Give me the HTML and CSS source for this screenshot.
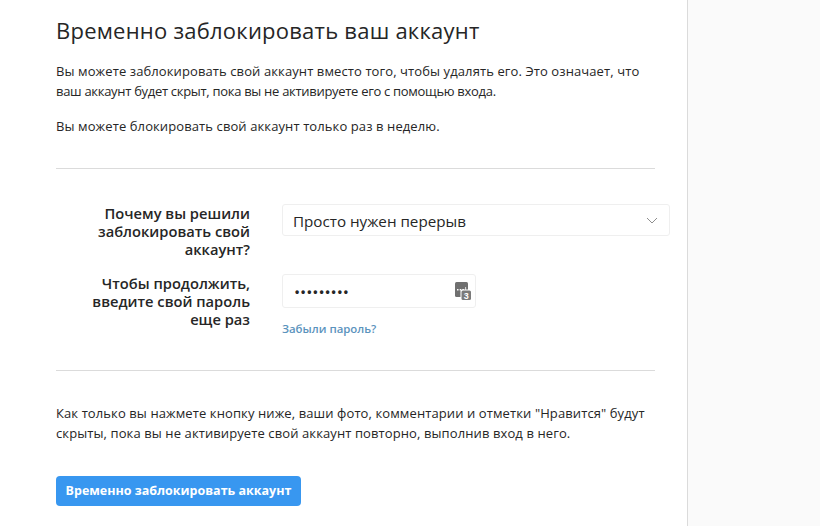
FILE: index.html
```html
<!DOCTYPE html>
<html lang="ru">
<head>
<meta charset="utf-8">
<title>Временно заблокировать ваш аккаунт</title>
<link rel="stylesheet" href="styles.css">
</head>
<body>
<div class="page">
  <main class="panel">
    <h1 class="title">Временно заблокировать ваш аккаунт</h1>
    <p class="text first">Вы можете заблокировать свой аккаунт вместо того, чтобы удалять его. Это означает, что<br><span class="tight">ваш аккаунт будет скрыт, пока вы не активируете его с помощью входа.</span></p>
    <p class="text second">Вы можете блокировать свой аккаунт только раз в неделю.</p>
    <hr class="rule rule-top">
    <div class="field field-reason">
      <div class="label">Почему вы решили заблокировать свой аккаунт?</div>
      <div class="control">
        <div class="select">
          <span>Просто нужен перерыв</span>
          <svg class="chevron" width="12" height="7" viewBox="0 0 12 7"><path d="M1 1l5 5 5-5" fill="none" stroke="#8e8e8e" stroke-width="1"/></svg>
        </div>
      </div>
    </div>
    <div class="field field-pass">
      <div class="label">Чтобы продолжить, введите свой пароль еще раз</div>
      <div class="control">
        <div class="input">
          <span class="dots">•••••••••</span>
          <svg class="keyicon" width="16" height="18" viewBox="0 0 16 18">
            <rect x="0" y="0" width="13" height="15" rx="1.5" fill="#707070"/>
            <rect x="2" y="7" width="1.5" height="1.5" fill="#fff"/>
            <rect x="4.7" y="7" width="1.5" height="1.5" fill="#fff"/>
            <rect x="7.4" y="7" width="1.5" height="1.5" fill="#fff"/>
            <rect x="10.1" y="5" width="1" height="3.5" fill="#ddd"/>
            <rect x="5.5" y="7.5" width="10.5" height="10.5" rx="1.5" fill="#fff"/>
            <rect x="6.5" y="8.5" width="9.5" height="9.5" rx="1.5" fill="#7a7a7a"/>
            <text class="keydigit" x="11.3" y="16.6" text-anchor="middle">3</text>
          </svg>
        </div>
        <a class="forgot" href="#">Забыли пароль?</a>
      </div>
    </div>
    <hr class="rule rule-bottom">
    <p class="text note">Как только вы нажмете кнопку ниже, ваши фото, комментарии и отметки "Нравится" будут<br>скрыты, пока вы не активируете свой аккаунт повторно, выполнив вход в него.</p>
    <button class="submit" type="button">Временно заблокировать аккаунт</button>
  </main>
  <aside class="side"></aside>
</div>
</body>
</html>
```
FILE: styles.css
```css
html, body {
  margin: 0;
  height: 526px;
  overflow: hidden;
}
body {
  font-family: "Open Sans", "Noto Sans", "Liberation Sans", sans-serif;
  color: #262626;
  background: #fafafa;
}
.page {
  display: flex;
  height: 526px;
}
.panel {
  box-sizing: border-box;
  width: 688px;
  flex-shrink: 0;
  padding: 14px 0 0 56px;
  background: #fff;
  border-right: 1px solid #dbdbdb;
}
.side {
  flex: 1;
  background: #fafafa;
}
.title {
  margin: 0;
  font-size: 22px;
  line-height: 32px;
  font-weight: 400;
  letter-spacing: 0.23px;
  white-space: nowrap;
}
.text {
  margin: 0;
  font-size: 13px;
  line-height: 20px;
  letter-spacing: 0.1px;
  white-space: nowrap;
}
.tight { letter-spacing: -0.3px; }
.first { margin-top: 15px; }
.second { margin-top: 15px; }
.rule {
  margin: 0;
  height: 1px;
  border: 0;
  background: #dbdbdb;
  width: 599px;
}
.rule-top { margin-top: 32px; }
.rule-bottom { margin-top: 33px; }
.field {
  display: flex;
  gap: 32px;
}
.field-reason { margin-top: 35px; }
.field-pass { margin-top: 15px; }
.label {
  box-sizing: border-box;
  width: 194px;
  flex-shrink: 0;
  padding-left: 30px;
  font-size: 14.7px;
  line-height: 18.2px;
  font-weight: 600;
  text-align: right;
}
.control {
  display: flex;
  flex-direction: column;
  align-items: flex-start;
}
.select {
  box-sizing: border-box;
  width: 388px;
  height: 32px;
  display: flex;
  align-items: center;
  justify-content: space-between;
  padding: 1px 11px 0 10px;
  border: 1px solid #efefef;
  border-radius: 3px;
  font-size: 15.2px;
}
.input {
  box-sizing: border-box;
  width: 194px;
  height: 34px;
  display: flex;
  align-items: center;
  justify-content: space-between;
  padding: 0 4px 0 12px;
  border: 1px solid #efefef;
  border-radius: 3px;
}
.dots {
  padding-top: 3px;
  font-family: "Liberation Sans", sans-serif;
  font-size: 12px;
  letter-spacing: 1.9px;
  font-weight: 700;
}
.keydigit {
  font-family: "Liberation Sans", sans-serif;
  font-size: 9px;
  font-weight: 700;
  fill: #fff;
}
.forgot {
  margin-top: 13px;
  font-size: 11.4px;
  line-height: 16px;
  font-weight: 600;
  color: #5b93bd;
  text-decoration: none;
}
.note { margin-top: 32px; }
.submit {
  display: block;
  margin-top: 33px;
  width: 245px;
  height: 30px;
  padding: 0;
  border: 0;
  border-radius: 4px;
  background: #3897f0;
  color: #fff;
  font-family: inherit;
  font-size: 12.5px;
  font-weight: 700;
}
```
